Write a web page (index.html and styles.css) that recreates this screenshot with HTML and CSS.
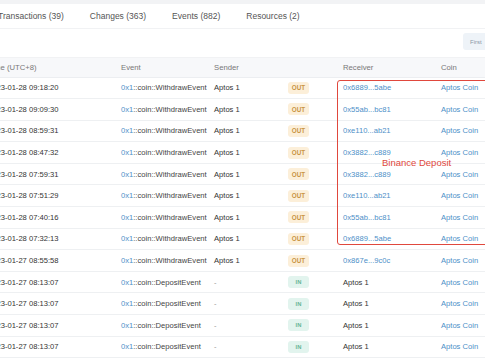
FILE: index.html
```html
<!DOCTYPE html>
<html>
<head>
<meta charset="utf-8">
<link rel="stylesheet" href="styles.css">
</head>
<body>
<div class="page">
  <div class="topband"></div>
  <nav class="tabs">
    <span class="tab">Transactions (39)</span>
    <span class="tab">Changes (363)</span>
    <span class="tab">Events (882)</span>
    <span class="tab">Resources (2)</span>
  </nav>
  <div class="toolbar">
    <button class="btn-first">First</button>
  </div>
  <div class="table">
    <div class="row head">
      <div>Time (UTC+8)</div><div>Event</div><div>Sender</div><div></div><div>Receiver</div><div>Coin</div>
    </div>
    <div class="row"><div class="time">2023-01-28 09:18:20</div><div class="ev"><span class="lnk">0x1</span>::coin::WithdrawEvent</div><div>Aptos 1</div><div><span class="badge out">OUT</span></div><div class="lnk">0x6889...5abe</div><div class="lnk">Aptos Coin</div></div>
    <div class="row"><div class="time">2023-01-28 09:09:30</div><div class="ev"><span class="lnk">0x1</span>::coin::WithdrawEvent</div><div>Aptos 1</div><div><span class="badge out">OUT</span></div><div class="lnk">0x55ab...bc81</div><div class="lnk">Aptos Coin</div></div>
    <div class="row"><div class="time">2023-01-28 08:59:31</div><div class="ev"><span class="lnk">0x1</span>::coin::WithdrawEvent</div><div>Aptos 1</div><div><span class="badge out">OUT</span></div><div class="lnk">0xe110...ab21</div><div class="lnk">Aptos Coin</div></div>
    <div class="row"><div class="time">2023-01-28 08:47:32</div><div class="ev"><span class="lnk">0x1</span>::coin::WithdrawEvent</div><div>Aptos 1</div><div><span class="badge out">OUT</span></div><div class="lnk">0x3882...c889</div><div class="lnk">Aptos Coin</div></div>
    <div class="row"><div class="time">2023-01-28 07:59:31</div><div class="ev"><span class="lnk">0x1</span>::coin::WithdrawEvent</div><div>Aptos 1</div><div><span class="badge out">OUT</span></div><div class="lnk">0x3882...c889</div><div class="lnk">Aptos Coin</div></div>
    <div class="row"><div class="time">2023-01-28 07:51:29</div><div class="ev"><span class="lnk">0x1</span>::coin::WithdrawEvent</div><div>Aptos 1</div><div><span class="badge out">OUT</span></div><div class="lnk">0xe110...ab21</div><div class="lnk">Aptos Coin</div></div>
    <div class="row"><div class="time">2023-01-28 07:40:16</div><div class="ev"><span class="lnk">0x1</span>::coin::WithdrawEvent</div><div>Aptos 1</div><div><span class="badge out">OUT</span></div><div class="lnk">0x55ab...bc81</div><div class="lnk">Aptos Coin</div></div>
    <div class="row"><div class="time">2023-01-28 07:32:13</div><div class="ev"><span class="lnk">0x1</span>::coin::WithdrawEvent</div><div>Aptos 1</div><div><span class="badge out">OUT</span></div><div class="lnk">0x6889...5abe</div><div class="lnk">Aptos Coin</div></div>
    <div class="row"><div class="time">2023-01-27 08:55:58</div><div class="ev"><span class="lnk">0x1</span>::coin::WithdrawEvent</div><div>Aptos 1</div><div><span class="badge out">OUT</span></div><div class="lnk">0x867e...9c0c</div><div class="lnk">Aptos Coin</div></div>
    <div class="row"><div class="time">2023-01-27 08:13:07</div><div class="ev"><span class="lnk">0x1</span>::coin::DepositEvent</div><div class="dash">-</div><div><span class="badge in">IN</span></div><div>Aptos 1</div><div class="lnk">Aptos Coin</div></div>
    <div class="row"><div class="time">2023-01-27 08:13:07</div><div class="ev"><span class="lnk">0x1</span>::coin::DepositEvent</div><div class="dash">-</div><div><span class="badge in">IN</span></div><div>Aptos 1</div><div class="lnk">Aptos Coin</div></div>
    <div class="row"><div class="time">2023-01-27 08:13:07</div><div class="ev"><span class="lnk">0x1</span>::coin::DepositEvent</div><div class="dash">-</div><div><span class="badge in">IN</span></div><div>Aptos 1</div><div class="lnk">Aptos Coin</div></div>
    <div class="row"><div class="time">2023-01-27 08:13:07</div><div class="ev"><span class="lnk">0x1</span>::coin::DepositEvent</div><div class="dash">-</div><div><span class="badge in">IN</span></div><div>Aptos 1</div><div class="lnk">Aptos Coin</div></div>
    <div class="annot">
      <span class="annot-label">Binance Deposit</span>
    </div>
  </div>
</div>
</body>
</html>
```
FILE: styles.css
```css
html, body {
  margin: 0;
  padding: 0;
  background: #ffffff;
  overflow: hidden;
}
body {
  width: 485px;
  height: 360px;
  font-family: "Liberation Sans", Arial, Helvetica, sans-serif;
  color: #333;
}
.page {
  width: 520px;
  margin-left: -12px;
}
.topband {
  height: 4px;
  background: #f2f3f5;
  margin-left: -20px;
}
.tabs {
  height: 25px;
  box-sizing: border-box;
  border-bottom: 1px solid #f1f2f4;
  display: flex;
  align-items: center;
  gap: 26px;
  padding-left: 10px;
  font-size: 8.5px;
  color: #555;
}
.toolbar {
  height: 29px;
  box-sizing: border-box;
  border-bottom: 1px solid #f1f2f4;
  display: flex;
  justify-content: flex-end;
  align-items: flex-start;
  padding-top: 4px;
}
.btn-first {
  width: 35px;
  height: 17px;
  margin-right: 10px;
  border: none;
  border-radius: 3px;
  background: #eef3f8;
  color: #8a96a6;
  font-family: inherit;
  font-size: 6px;
  padding: 0 0 0 7px;
  text-align: left;
}
.table {
  position: relative;
}
.row {
  display: grid;
  grid-template-columns: 133px 93px 74px 55px 98px 1fr;
  height: 21.6px;
  box-sizing: border-box;
  border-bottom: 1px solid #eef0f2;
  align-items: center;
  font-size: 7.6px;
  color: #333;
  white-space: nowrap;
}
.row.head {
  height: 19.5px;
  background: #f7f8fa;
  color: #777;
  font-size: 7.7px;
  border-bottom: 1px solid #eceef1;
}
.lnk {
  color: #4c8fc8;
}
.ev {
  color: #444;
}
.dash {
  color: #999;
}
.badge {
  display: inline-flex;
  align-items: center;
  justify-content: center;
  width: 21px;
  height: 12px;
  border-radius: 3px;
  font-size: 6.3px;
  font-weight: bold;
}
.badge.out {
  background: #fcefd9;
  color: #c99443;
}
.badge.in {
  background: #e2f4ee;
  color: #69b596;
  font-size: 5.8px;
}
.annot {
  position: absolute;
  left: 349px;
  top: 22px;
  width: 200px;
  height: 165px;
  box-sizing: border-box;
  border: 1.5px solid #e0483d;
  border-radius: 3px;
}
.annot-label {
  position: absolute;
  left: 44px;
  top: 76px;
  font-size: 9.5px;
  color: #e0483d;
}
```
